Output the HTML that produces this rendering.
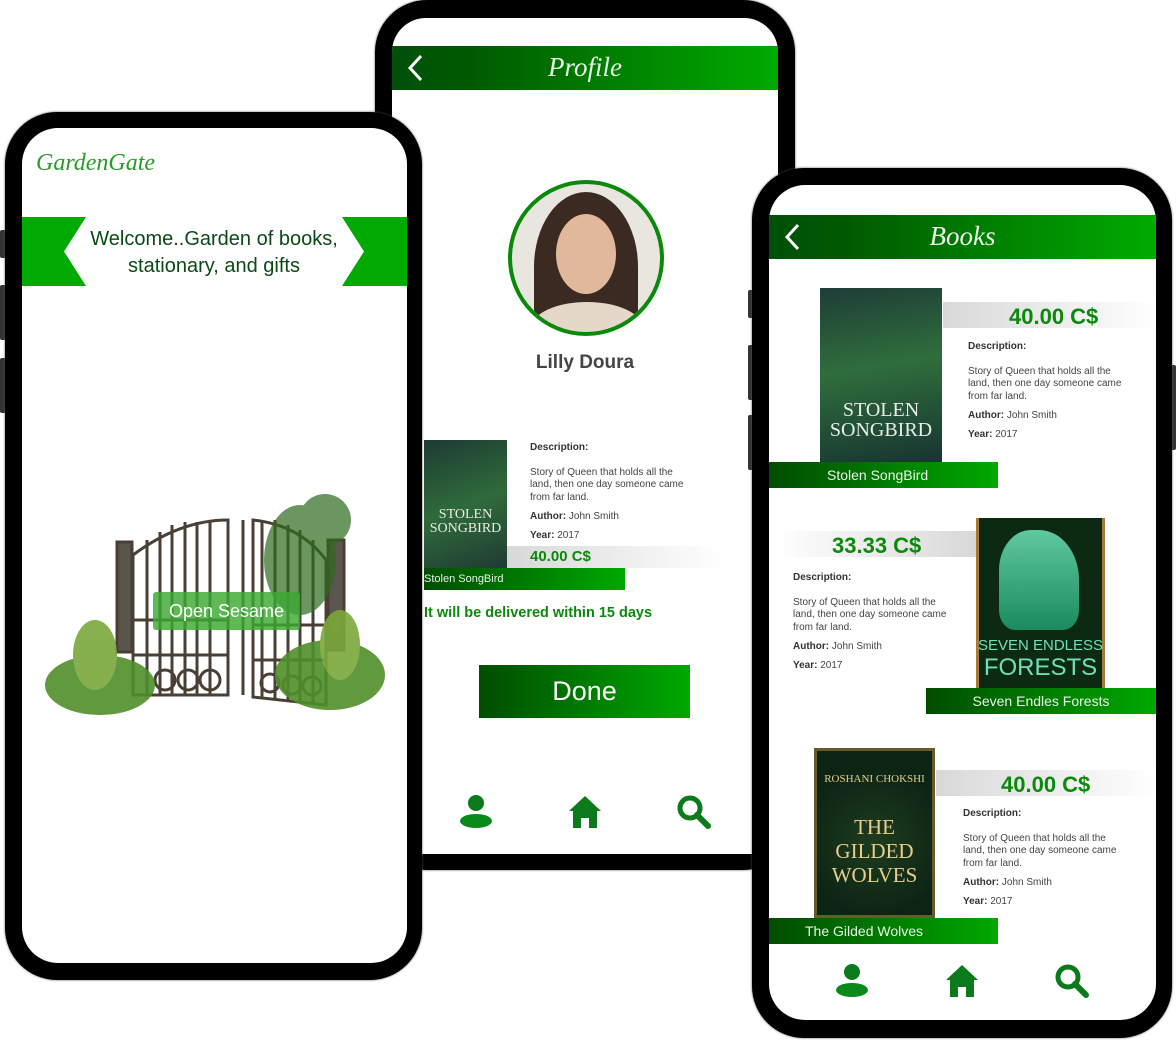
<!DOCTYPE html>
<html><head><meta charset="utf-8"><style>
*{margin:0;padding:0;box-sizing:border-box}
body{width:1176px;height:1040px;background:#fff;position:relative;overflow:hidden;font-family:"Liberation Sans","DejaVu Sans",sans-serif}
.ph{position:absolute;background:#000;border-radius:52px;box-shadow:0 0 2px #555}
.sc{position:absolute;background:#fff;border-radius:36px;overflow:hidden}
.a{position:absolute}
.g{background:linear-gradient(90deg,#004d00,#00a800)}
.hdr{position:absolute;left:0;right:0;height:44px;background:linear-gradient(90deg,#00500a,#005a00 20%,#00ab00)}
.hdr .t{position:absolute;left:0;right:0;top:6px;text-align:center;color:#e8f5e8;font:italic 27px "Liberation Serif",serif}
.pb{position:absolute;height:26px;background:linear-gradient(90deg,#d8d8d8,#fff)}
.pbr{position:absolute;height:26px;background:linear-gradient(90deg,#fff,#d8d8d8)}
.pr{position:absolute;color:#0a8a0a;font-weight:bold;font-size:22px}
.d{position:absolute;font-size:10px;color:#444;line-height:12.5px;width:158px}
.d b{color:#333}
.nb{position:absolute;height:26px;color:#e8f5e8;font-size:14px;line-height:26px}
.btn{position:absolute;width:6px;background:#333;border-radius:2px}
</style></head><body>

<!-- middle phone -->
<div class="ph" style="left:375px;top:0;width:420px;height:870px">
 <div class="sc" style="left:17px;top:18px;width:386px;height:836px;border-radius:34px 34px 0 0">
  <div class="hdr" style="top:28px"><div class="t">Profile</div>
   <svg class="a" style="left:14px;top:8px" width="20" height="28"><path d="M15 2 L4 14 L15 26" stroke="#fff" stroke-width="3" fill="none"/></svg></div>
  <div class="a" style="left:116px;top:162px;width:156px;height:156px;border-radius:50%;border:4px solid #0a8a0a;overflow:hidden;background:#e9e6e0">
   <div class="a" style="left:22px;top:8px;width:104px;height:150px;border-radius:50% 50% 10% 10%;background:#3a2a22"></div>
   <div class="a" style="left:44px;top:30px;width:60px;height:80px;border-radius:50%;background:#e2b89c"></div>
   <div class="a" style="left:20px;top:118px;width:110px;height:50px;border-radius:50% 50% 0 0;background:#e6d8c8"></div>
  </div>
  <div class="a" style="left:0;right:0;top:334px;text-align:center;font-size:19px;font-weight:bold;color:#444">Lilly Doura</div>
  <div class="a" style="left:32px;top:422px;width:83px;height:130px;background:linear-gradient(160deg,#1d3b34,#2f6b3a 50%,#1f3a33)"></div>
  <div class="a" style="left:32px;top:490px;width:83px;text-align:center;color:#e8eee8;font:14px 'Liberation Serif',serif;line-height:14px">STOLEN<br>SONGBIRD</div>
  <div class="d" style="left:138px;top:424px"><b>Description:</b><br><div style="margin-top:12px">Story of Queen that holds all the land, then one day someone came from far land.</div><div style="margin-top:7px"><b>Author:</b> John Smith</div><div style="margin-top:6px"><b>Year:</b> 2017</div></div>
  <div class="pb" style="left:115px;top:528px;width:215px;height:22px"></div>
  <div class="pr" style="left:138px;top:530px;font-size:15px">40.00 C$</div>
  <div class="nb g" style="left:32px;top:550px;width:201px;height:22px;line-height:22px;font-size:11px">Stolen SongBird</div>
  <div class="a" style="left:32px;top:587px;color:#0a8a0a;font-weight:bold;font-size:14.5px">It will be delivered within 15 days</div>
  <div class="a g" style="left:87px;top:647px;width:211px;height:53px;color:#fff;font-size:27px;text-align:center;line-height:52px">Done</div>
  <svg class="a" style="left:66px;top:776px" width="36" height="36"><circle cx="18" cy="9" r="8" fill="#0a7a1a"/><ellipse cx="18" cy="27" rx="16" ry="7" fill="#0a8a1a"/></svg>
  <svg class="a" style="left:175px;top:776px" width="36" height="36"><path d="M18 2 L34 17 L30 17 L30 34 L22 34 L22 24 L14 24 L14 34 L6 34 L6 17 L2 17 Z" fill="#0a7a1a"/></svg>
  <svg class="a" style="left:284px;top:776px" width="36" height="36"><circle cx="14" cy="14" r="10" stroke="#0a7a1a" stroke-width="5" fill="none"/><path d="M21 21 L32 32" stroke="#0a7a1a" stroke-width="6" stroke-linecap="round"/></svg>
 </div>
</div>

<!-- left phone -->
<div class="btn" style="left:0;top:230px;height:28px"></div>
<div class="btn" style="left:0;top:285px;height:55px"></div>
<div class="btn" style="left:0;top:358px;height:55px"></div>
<div class="ph" style="left:5px;top:112px;width:417px;height:868px">
 <div class="sc" style="left:17px;top:16px;width:385px;height:835px">
  <div class="a" style="left:14px;top:22px;font:italic 24px 'Liberation Serif',serif;color:#2a9a2a">GardenGate</div>
  <div class="a" style="left:0;top:89px;width:385px;height:69px;background:#00aa00"></div>
  <div class="a" style="left:42px;top:89px;width:300px;height:69px;background:#fff;clip-path:polygon(22px 0,278px 0,300px 50%,278px 100%,22px 100%,0 50%)"></div>
  <div class="a" style="left:42px;top:98px;width:300px;text-align:center;color:#0b4a16;font-size:20px;line-height:27px">Welcome..Garden of books, stationary, and gifts</div>
  <svg class="a" style="left:0;top:350px" width="385" height="260" viewBox="22 478 385 260">
   <g stroke="#4a3f35" fill="none" stroke-width="3">
    <rect x="117" y="542" width="15" height="110" fill="#5a564e"/>
    <rect x="328" y="540" width="16" height="110" fill="#5a564e"/>
    <path d="M133 555 Q180 520 228 520 L228 695 L133 695 Z"/>
    <path d="M253 520 Q300 525 326 560 L326 705 L253 697 Z"/>
    <path d="M147 540 V695 M160 532 V695 M172 525 V695 M185 522 V695 M197 522 V695 M210 520 V695 M243 520 V695"/>
    <path d="M262 520 V697 M275 520 V699 M288 525 V700 M300 530 V701 M313 540 V703"/>
    <path d="M133 620 H228 M133 655 H228 M253 625 H326 M253 660 H326"/>
    <circle cx="165" cy="680" r="10"/><circle cx="188" cy="680" r="10"/><circle cx="210" cy="680" r="10"/>
    <circle cx="270" cy="683" r="9"/><circle cx="292" cy="685" r="9"/><circle cx="312" cy="686" r="9"/>
   </g>
   <g fill="#2f6a1e" opacity=".7">
    <ellipse cx="300" cy="560" rx="36" ry="55"/><ellipse cx="325" cy="520" rx="26" ry="26"/>
   </g>
   <g fill="#4f8f2a" opacity=".9">
    <ellipse cx="100" cy="685" rx="55" ry="30"/><ellipse cx="95" cy="655" rx="22" ry="35" fill="#7aa83a"/>
    <ellipse cx="330" cy="675" rx="55" ry="35"/><ellipse cx="340" cy="645" rx="20" ry="35" fill="#7aa83a"/>
   </g>
  </svg>
  <div class="a" style="left:131px;top:464px;width:147px;height:38px;background:rgba(60,170,50,.82);border-radius:3px;color:#fff;font-size:18px;text-align:center;line-height:38px">Open Sesame</div>
 </div>
</div>

<!-- right phone -->
<div class="btn" style="left:748px;top:290px;height:28px"></div>
<div class="btn" style="left:748px;top:345px;height:55px"></div>
<div class="btn" style="left:748px;top:415px;height:55px"></div>
<div class="btn" style="left:1170px;top:365px;height:85px"></div>
<div class="ph" style="left:752px;top:168px;width:420px;height:870px">
 <div class="sc" style="left:17px;top:17px;width:387px;height:835px">
  <div class="hdr" style="top:30px"><div class="t">Books</div>
   <svg class="a" style="left:14px;top:8px" width="20" height="28"><path d="M15 2 L4 14 L15 26" stroke="#fff" stroke-width="3" fill="none"/></svg></div>
  <!-- card 1 -->
  <div class="a" style="left:51px;top:103px;width:122px;height:174px;background:linear-gradient(170deg,#1e3d37,#2f6e3c 45%,#173531)"></div>
  <div class="a" style="left:51px;top:215px;width:122px;text-align:center;color:#e8eee8;font:20px 'Liberation Serif',serif;line-height:20px">STOLEN<br>SONGBIRD</div>
  <div class="pb" style="left:174px;top:117px;width:213px"></div>
  <div class="pr" style="left:240px;top:119px">40.00 C$</div>
  <div class="d" style="left:199px;top:156px"><b>Description:</b><br><div style="margin-top:12px">Story of Queen that holds all the land, then one day someone came from far land.</div><div style="margin-top:7px"><b>Author:</b> John Smith</div><div style="margin-top:6px"><b>Year:</b> 2017</div></div>
  <div class="nb g" style="left:0;top:277px;width:229px;padding-left:58px">Stolen SongBird</div>
  <!-- card 2 -->
  <div class="pbr" style="left:6px;top:346px;width:201px"></div>
  <div class="pr" style="left:63px;top:348px">33.33 C$</div>
  <div class="d" style="left:24px;top:387px"><b>Description:</b><br><div style="margin-top:12px">Story of Queen that holds all the land, then one day someone came from far land.</div><div style="margin-top:7px"><b>Author:</b> John Smith</div><div style="margin-top:6px"><b>Year:</b> 2017</div></div>
  <div class="a" style="left:207px;top:333px;width:129px;height:170px;background:#0c2a12;border-left:3px solid #a67a3a;border-right:3px solid #a67a3a"></div>
  <div class="a" style="left:230px;top:345px;width:80px;height:100px;border-radius:40% 50% 20% 20%;background:linear-gradient(#5fc9a0,#1b8a5e)"></div>
  <div class="a" style="left:207px;top:450px;width:129px;text-align:center;color:#6ee0b8;font-size:15px;line-height:22px">SEVEN ENDLESS<br><span style="font-size:24px">FORESTS</span></div>
  <div class="nb g" style="left:157px;top:503px;width:230px;text-align:center">Seven Endles Forests</div>
  <!-- card 3 -->
  <div class="a" style="left:45px;top:563px;width:121px;height:170px;background:radial-gradient(circle at 50% 55%,#1e3c20,#0d2414 70%);border:3px solid #6a5a2a"></div>
  <div class="a" style="left:45px;top:578px;width:121px;text-align:center;color:#e6cf8a;font:21px 'Liberation Serif',serif;line-height:24px"><span style="font-size:11px">ROSHANI CHOKSHI</span><br><br>THE<br>GILDED<br>WOLVES</div>
  <div class="pb" style="left:167px;top:585px;width:220px"></div>
  <div class="pr" style="left:232px;top:587px">40.00 C$</div>
  <div class="d" style="left:194px;top:623px"><b>Description:</b><br><div style="margin-top:12px">Story of Queen that holds all the land, then one day someone came from far land.</div><div style="margin-top:7px"><b>Author:</b> John Smith</div><div style="margin-top:6px"><b>Year:</b> 2017</div></div>
  <div class="nb g" style="left:0;top:733px;width:229px;padding-left:36px">The Gilded Wolves</div>
  <svg class="a" style="left:65px;top:778px" width="36" height="36"><circle cx="18" cy="9" r="8" fill="#0a7a1a"/><ellipse cx="18" cy="27" rx="16" ry="7" fill="#0a8a1a"/></svg>
  <svg class="a" style="left:175px;top:778px" width="36" height="36"><path d="M18 2 L34 17 L30 17 L30 34 L22 34 L22 24 L14 24 L14 34 L6 34 L6 17 L2 17 Z" fill="#0a7a1a"/></svg>
  <svg class="a" style="left:285px;top:778px" width="36" height="36"><circle cx="14" cy="14" r="10" stroke="#0a7a1a" stroke-width="5" fill="none"/><path d="M21 21 L32 32" stroke="#0a7a1a" stroke-width="6" stroke-linecap="round"/></svg>
 </div>
</div>
</body></html>
